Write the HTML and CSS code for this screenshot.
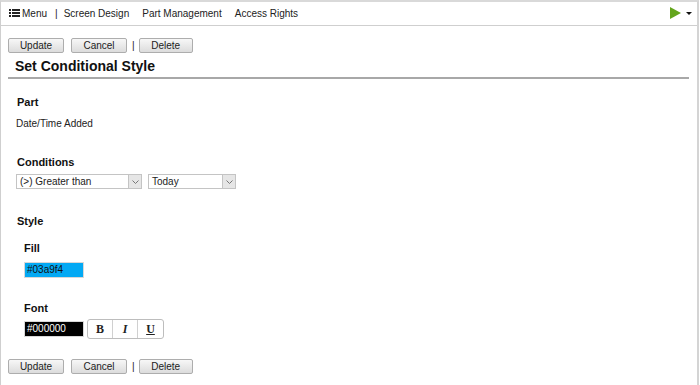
FILE: index.html
```html
<!DOCTYPE html>
<html lang="en">
<head>
  <meta charset="UTF-8">
  <title>Set Conditional Style</title>
  <link rel="stylesheet" href="styles.css">
</head>
<body>
  <div class="frame">
    <div class="nav">
      <div class="nav-left">
        <svg class="menu-icon" width="11" height="8" viewBox="0 0 11 8">
          <rect x="0" y="0" width="2" height="2" fill="#222"/>
          <rect x="3" y="0" width="8" height="2" fill="#222"/>
          <rect x="0" y="3" width="2" height="2" fill="#222"/>
          <rect x="3" y="3" width="8" height="2" fill="#222"/>
          <rect x="0" y="6" width="2" height="2" fill="#222"/>
          <rect x="3" y="6" width="8" height="2" fill="#222"/>
        </svg>
        <span>Menu</span>
        <span class="sep">|</span>
        <span class="link">Screen Design</span>
        <span class="link">Part Management</span>
        <span class="link">Access Rights</span>
      </div>
      <div class="nav-right">
        <svg width="11" height="12" viewBox="0 0 11 12"><polygon points="0,0 11,6 0,12" fill="#63a51c"/></svg>
        <svg width="6" height="3" viewBox="0 0 6 3"><polygon points="0,0 6,0 3,3" fill="#111"/></svg>
      </div>
    </div>

    <div class="content">
      <div class="toolbar">
        <button class="btn">Update</button>
        <button class="btn">Cancel</button>
        <span class="bar">|</span>
        <button class="btn btn-delete">Delete</button>
      </div>

      <h1 class="title">Set Conditional Style</h1>

      <div class="section">
        <div class="label label-part">Part</div>
        <div class="value">Date/Time Added</div>

        <div class="label label-cond">Conditions</div>
        <div class="selects">
          <div class="select sel-op"><span>(&gt;) Greater than</span><i class="arrow"><svg width="7" height="4" viewBox="0 0 7 4"><polyline points="0.5,0.5 3.5,3.5 6.5,0.5" fill="none" stroke="#777" stroke-width="1"/></svg></i></div>
          <div class="select sel-val"><span>Today</span><i class="arrow"><svg width="7" height="4" viewBox="0 0 7 4"><polyline points="0.5,0.5 3.5,3.5 6.5,0.5" fill="none" stroke="#777" stroke-width="1"/></svg></i></div>
        </div>

        <div class="label label-style">Style</div>
        <div class="style-box">
          <div class="label label-fill">Fill</div>
          <div class="swatch fill-swatch">#03a9f4</div>

          <div class="label label-font">Font</div>
          <div class="font-row">
            <div class="swatch font-swatch">#000000</div>
            <div class="biu">
              <span class="b">B</span>
              <span class="i">I</span>
              <span class="u">U</span>
            </div>
          </div>
        </div>
      </div>

      <div class="toolbar toolbar-bottom">
        <button class="btn">Update</button>
        <button class="btn">Cancel</button>
        <span class="bar">|</span>
        <button class="btn btn-delete">Delete</button>
      </div>
    </div>
  </div>
</body>
</html>
```

FILE: styles.css
```css
* {
  box-sizing: border-box;
}
body {
  margin: 0;
  font-family: "Liberation Sans", Arial, sans-serif;
  font-size: 10px;
  color: #222;
  background: white;
}
.frame {
  width: 699px;
  height: 385px;
  border-top: 2px solid #d9d9d9;
  border-left: 1px solid #cfcfcf;
  border-right: 2px solid #d4d4d4;
}
.nav {
  height: 24px;
  display: flex;
  justify-content: space-between;
  align-items: center;
  padding: 0 5px 1px 8px;
  border-bottom: 1px solid #cfcfcf;
}
.nav-left {
  display: flex;
  align-items: center;
}
.menu-icon {
  margin-right: 2px;
}
.sep {
  margin: 0 6px 0 8px;
}
.link {
  margin-right: 13px;
}
.nav-right {
  display: flex;
  align-items: center;
  gap: 5px;
}
.content {
  padding: 12px 8px 0 7px;
}
.toolbar {
  display: flex;
  align-items: center;
  height: 15px;
}
.btn {
  height: 15px;
  width: 56px;
  padding: 0;
  margin-right: 7px;
  font-family: "Liberation Sans", Arial, sans-serif;
  font-size: 10px;
  color: #222;
  border: 1px solid #adadad;
  border-radius: 2px;
  background: linear-gradient(#f7f7f7, #dcdcdc);
}
.btn-delete {
  width: 54px;
}
.bar {
  margin: 0 4px 0 -2px;
}
.title {
  margin: 5px 0 0 0;
  padding: 0 0 3px 7px;
  font-size: 14px;
  line-height: 16px;
  font-weight: bold;
  color: #111;
  border-bottom: 2px solid #a8a8a8;
}
.section {
  padding-left: 8px;
}
.label {
  font-size: 11px;
  line-height: 13px;
  font-weight: bold;
  color: #111;
}
.label-part {
  margin-top: 17px;
  margin-left: 1px;
}
.value {
  margin-top: 9px;
  line-height: 12px;
}
.label-cond {
  margin-top: 26px;
  margin-left: 1px;
}
.selects {
  display: flex;
  gap: 6px;
  margin-top: 5px;
}
.select {
  height: 15px;
  display: flex;
  align-items: center;
  justify-content: space-between;
  border: 1px solid #c4c4c4;
  padding-left: 3px;
  background: white;
}
.sel-op {
  width: 126px;
}
.sel-val {
  width: 88px;
}
.arrow {
  width: 13px;
  height: 13px;
  display: flex;
  align-items: center;
  justify-content: center;
  background: #e6e6e6;
  border-left: 1px solid #c4c4c4;
}
.label-style {
  margin-top: 26px;
  margin-left: 1px;
}
.style-box {
  padding-left: 8px;
}
.label-fill {
  margin-top: 14px;
}
.swatch {
  width: 60px;
  height: 16px;
  padding-left: 2px;
  line-height: 14px;
  border: 1px solid #d8d8d8;
}
.fill-swatch {
  margin-top: 7px;
  background: #03a9f4;
  color: #111;
}
.label-font {
  margin-top: 24px;
}
.font-row {
  display: flex;
  align-items: center;
  gap: 3px;
  margin-top: 4px;
}
.font-swatch {
  background: #000;
  color: white;
}
.biu {
  display: flex;
  height: 20px;
  border: 1px solid #bdbdbd;
  border-radius: 3px;
  background: white;
}
.biu span {
  width: 25px;
  display: flex;
  align-items: center;
  justify-content: center;
  font-family: "Liberation Serif", "Times New Roman", serif;
  font-size: 12px;
  color: #222;
  border-right: 1px solid #d0d0d0;
}
.biu span:last-child {
  border-right: none;
}
.biu .b {
  font-weight: bold;
}
.biu .i {
  font-style: italic;
  font-weight: bold;
}
.biu .u {
  text-decoration: underline;
  font-weight: bold;
}
.toolbar-bottom {
  margin-top: 20px;
}
```
